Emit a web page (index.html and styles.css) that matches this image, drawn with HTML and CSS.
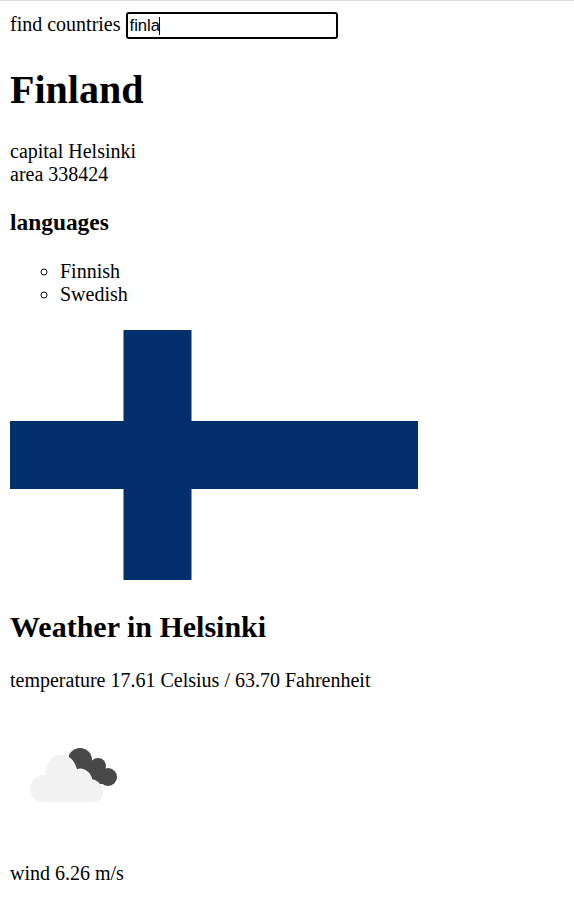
FILE: index.html
```html
<!DOCTYPE html>
<html lang="en">
<head>
    <meta charset="UTF-8">
    <title>countries</title>
    <link rel="stylesheet" href="styles.css">
</head>
<body>
<div class="topline"></div>
<div class="page">
    <div class="search">
        <span class="label">find countries</span>
        <span class="field"><input class="find" type="text" value="finla"><span class="caret"></span></span>
    </div>
    <h1>Finland</h1>
    <div>capital Helsinki</div>
    <div>area 338424</div>
    <h3>languages</h3>
    <ul>
        <li>Finnish</li>
        <li>Swedish</li>
    </ul>
    <svg class="flag" viewBox="0 0 408 250">
        <rect width="408" height="250" fill="#fff"/>
        <rect x="113.500" width="68" height="250" fill="#002f6c"/>
        <rect y="91" width="408" height="68" fill="#002f6c"/>
    </svg>
    <h2>Weather in Helsinki</h2>
    <div class="temp">temperature 17.61 Celsius / 63.70 Fahrenheit</div>
    <svg class="icon" viewBox="0 0 125 125">
        <g fill="#484848">
            <circle cx="70" cy="48" r="12"/>
            <circle cx="88" cy="54" r="8"/>
            <circle cx="98" cy="65" r="9"/>
            <path d="M62 50 L88 50 L98 72 L80 72Z"/>
        </g>
        <path class="cloud" d="M33 90 C25 90 20 84 20 77 C20 69 27 63 35 63 C35 53 40 43 50 43 C58 43 64 49 66.700 58.700 C72 55 80 60 81.700 68 C88 69 93 75 93 81 C93 86 89 90 84 90Z"/>
    </svg>
    <div class="wind">wind 6.26 m/s</div>
</div>
</body>
</html>
```

FILE: styles.css
```css
body{
    margin: 0;
    font-family: "Liberation Serif", serif;
    font-size: 20px;
    color: #000;
    background: #fff;
}
.topline{
    height: 1px;
    background: #dedede;
}
.page{
    padding: 0 10px;
}
.search{
    display: flex;
    align-items: flex-start;
    gap: 5px;
    padding-top: 11px;
}
.label{
    padding-top: 1px;
}
.field{
    position: relative;
    display: block;
    height: 27px;
}
.find{
    display: block;
    box-sizing: border-box;
    width: 212px;
    height: 27px;
    padding: 1px 2px;
    border: 2px solid #000;
    border-radius: 3px;
    outline: none;
    font-family: "Liberation Sans", sans-serif;
    font-size: 16.670px;
    color: #000;
}
/*输入光标*/
.caret{
    position: absolute;
    top: 5px;
    left: 33px;
    width: 1px;
    height: 18px;
    background: #000;
}
h1{
    font-size: 40px;
    margin: 27px 0;
}
h2{
    font-size: 30px;
    margin: 25px 0;
}
h3{
    font-size: 23.400px;
    margin: 23.400px 0;
}
ul{
    margin: 20px 0;
    padding-left: 50px;
    list-style-type: circle;
}
.flag{
    display: inline-block;
    width: 408px;
    height: 250px;
    margin-top: 4px;
}
.temp{
    margin: 21px 0 20px;
}
.icon{
    display: inline-block;
    width: 125px;
    height: 125px;
}
.cloud{
    fill: #f2f2f2;
    stroke: #fff;
    stroke-width: 1.500px;
    paint-order: stroke;
}
.wind{
    margin: 20px 0;
}
```
